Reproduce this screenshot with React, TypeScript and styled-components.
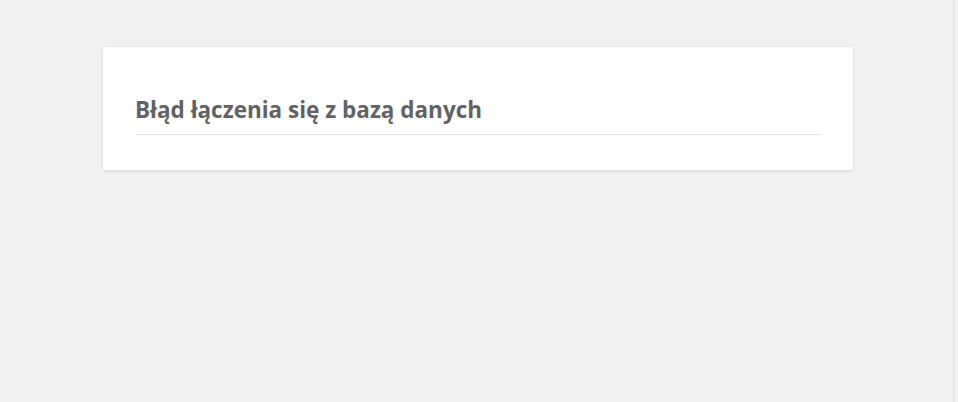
import React from "react";
import styled, { createGlobalStyle } from "styled-components";

const Global = createGlobalStyle`
  html { background: #f1f1f1; }
  body {
    margin: 0;
    background: #f1f1f1;
    font-family: "Open Sans", "Noto Sans", sans-serif;
    min-height: 402px;
  }
`;

const Page = styled.div`
  display: flex;
  padding: 47px 0 0 103px;
  min-height: 402px;
  box-sizing: border-box;
  border-right: 2px solid #e8e8e8;
  width: 955px;
`;

const Card = styled.div`
  width: 750px;
  box-sizing: border-box;
  background: #fff;
  padding: 1px 31px 0 32px;
  box-shadow: 0 1px 3px rgba(0, 0, 0, 0.13);
  height: 123px;
`;

const Title = styled.h1`
  margin: 48px 0 0 0;
  padding: 0 0 10px 0;
  border-bottom: 1px solid #e6e6e6;
  color: #626262;
  font-family: "Open Sans", "Noto Sans", sans-serif;
  font-weight: 700;
  font-size: 22.5px;
  line-height: 28px;
  letter-spacing: 0;
`;

export default function App() {
  return (
    <>
      <Global />
      <Page>
        <Card>
          <Title>Błąd łączenia się z bazą danych</Title>
        </Card>
      </Page>
    </>
  );
}
